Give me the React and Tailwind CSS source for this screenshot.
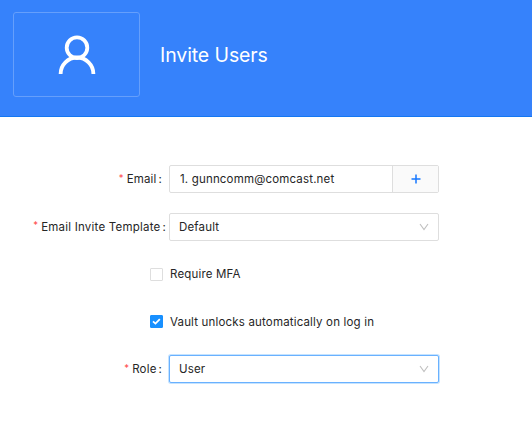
function Label({ children, tight }) {
  return (
    <label className={`w-[169px] shrink-0 flex justify-end items-center ${tight ? "pr-[3px]" : "pr-[7px]"}`}>
      <span className="text-[#ff4d4f] mr-[3px] text-[9.5px] leading-none -mt-[3px]">*</span>
      <span className={tight ? "tracking-[0.22px]" : "tracking-[0.17px]"}>{children}</span>
      <span className="ml-[2px]">:</span>
    </label>
  );
}

function Chevron() {
  return (
    <svg width="10" height="8" viewBox="0 0 10 8" fill="none" stroke="#bfbfbf" strokeWidth="1.1">
      <path d="M1 1 L5 6.6 L9 1" />
    </svg>
  );
}

function Select({ value, focused }) {
  return (
    <div
      className={`w-[270px] h-[28px] rounded-[2px] border bg-white pl-[9px] pr-[9px] flex items-center justify-between ${
        focused ? "border-[#69b1ff] shadow-[0_0_0_1px_rgba(24,144,255,0.25)]" : "border-[#dedede]"
      }`}
    >
      <span>{value}</span>
      <Chevron />
    </div>
  );
}

function Checkbox({ checked, children }) {
  return (
    <label className="ml-[150px] h-[28px] flex items-center gap-[7px]">
      <span
        className={`w-[13px] h-[13px] rounded-[1px] border flex items-center justify-center ${
          checked ? "bg-[#1890ff] border-[#1890ff]" : "bg-white border-[#dedede]"
        }`}
      >
        {checked && (
          <svg className="shrink-0" width="9" height="7" viewBox="0 0 10 8" fill="none" stroke="#fff" strokeWidth="2">
            <path d="M1 3.8 L3.8 6.4 L8.8 1.2" />
          </svg>
        )}
      </span>
      <span>{children}</span>
    </label>
  );
}

export default function App() {
  return (
    <div className="w-[532px] h-[440px] overflow-hidden bg-white font-['Inter',sans-serif] text-[11.5px] leading-[18px] tracking-[0.17px] text-[#262626]">
      <header className="h-[117px] bg-[#3682fb] border-b border-[#1477f2] pt-[12px] pl-[13px] flex items-start">
        <div className="w-[127px] h-[85px] rounded-[3px] border border-[#659ffc] flex items-center justify-center">
          <svg width="38" height="40" viewBox="0 0 38 40" fill="none" stroke="#fff" strokeWidth="3.8">
            <circle cx="19" cy="12.7" r="10.3" />
            <path d="M2.6 38.9 A16.4 16.4 0 0 1 35.4 38.9" />
          </svg>
        </div>
        <h1 className="ml-[20px] h-[86px] flex items-center text-[19.5px] text-white tracking-[-0.1px]">Invite Users</h1>
      </header>
      <form className="pt-[48px] flex flex-col gap-[19.6px]">
        <div className="flex h-[28px]">
          <Label>Email</Label>
          <div className="w-[270px] h-[28px] rounded-[2px] border border-[#dedede] flex">
            <div className="flex-1 pl-[10px] flex items-center">1. gunncomm@comcast.net</div>
            <button type="button" className="w-[46px] border-l border-[#dedede] bg-[#fafafa] flex items-center justify-center">
              <svg width="10" height="10" viewBox="0 0 10 10" stroke="#1677ff" strokeWidth="1.5">
                <path d="M5 0.5V9.5M0.5 5H9.5" />
              </svg>
            </button>
          </div>
        </div>
        <div className="flex h-[28px]">
          <Label tight>Email Invite Template</Label>
          <Select value="Default" />
        </div>
        <Checkbox>Require MFA</Checkbox>
        <Checkbox checked>Vault unlocks automatically on log in</Checkbox>
        <div className="flex h-[28px]">
          <Label>Role</Label>
          <Select value="User" focused />
        </div>
      </form>
    </div>
  );
}
